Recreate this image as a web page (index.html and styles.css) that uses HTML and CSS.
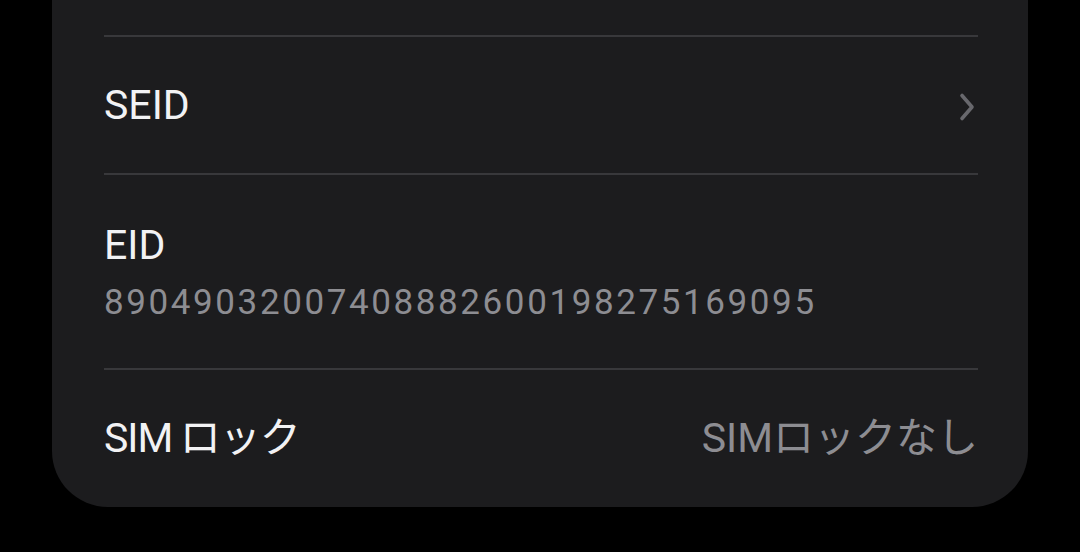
FILE: index.html
```html
<!DOCTYPE html>
<html lang="ja">

<head>
    <meta charset="UTF-8">
    <meta name="viewport" content="width=device-width, initial-scale=1.0">
    <title>SIM info</title>
    <link rel="stylesheet" href="styles.css">
</head>

<body>

    <div class="card">
        <div class="row link">
            <p class="label">SEID</p>
            <svg class="chevron" width="16" height="30" viewBox="0 0 16 30">
                <path d="M3 3.5 L13 15 L3 26.5" fill="none" stroke="#68686d" stroke-width="3.6" stroke-linecap="round" stroke-linejoin="round" />
            </svg>
        </div>

        <div class="row stacked">
            <p class="label">EID</p>
            <p class="sub">89049032007408882600198275169095</p>
        </div>

        <div class="row">
            <p class="label tight">SIM&thinsp;ロック</p>
            <p class="value">SIMロックなし</p>
        </div>
    </div>

</body>

</html>
```

FILE: styles.css
```css
* {
    margin: 0;
    padding: 0;
    box-sizing: border-box;
}

body {
    background: #000;
    font-family: Roboto, "Noto Sans CJK JP", sans-serif;
    color: #f2f2f4;
}

.card {
    margin: 0 52px;
    height: 507px;
    padding-top: 35px;
    padding-left: 52px;
    background: #1c1c1e;
    border-radius: 0 0 56px 56px;
}

.row {
    display: flex;
    align-items: center;
    justify-content: space-between;
    margin-right: 50px;
    height: 138px;
    border-top: 2px solid #38383b;
}

.row.stacked {
    height: 195px;
    flex-direction: column;
    align-items: flex-start;
    justify-content: center;
    gap: 14px;
}

.label {
    font-size: 41px;
    line-height: 48px;
}

.label.tight {
    letter-spacing: -1px;
}

.sub {
    font-size: 35px;
    line-height: 40px;
    letter-spacing: 2.6px;
    color: #8d8d92;
}

.value {
    font-size: 41px;
    line-height: 48px;
    color: #8d8d92;
}

.chevron {
    margin-right: 3px;
    margin-top: 4px;
}
```
